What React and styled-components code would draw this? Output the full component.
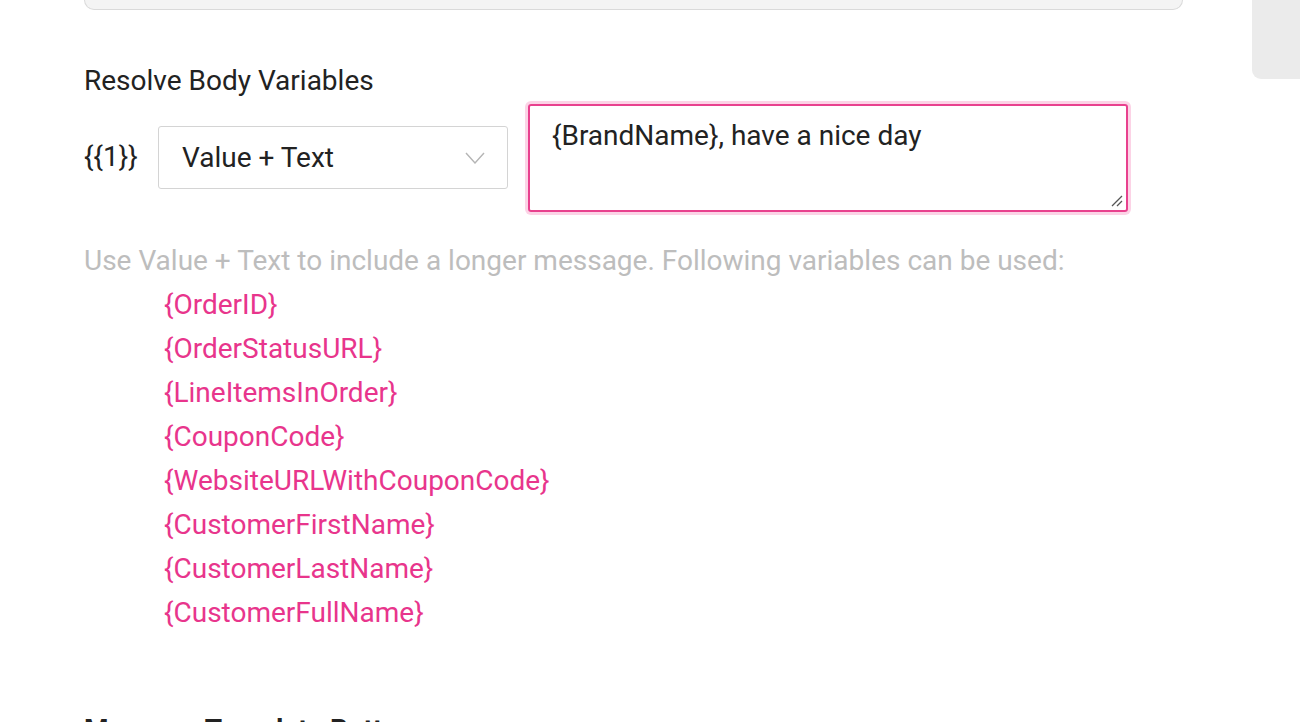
import React from "react";
import styled, { createGlobalStyle } from "styled-components";

const Global = createGlobalStyle`
  html, body { margin: 0; padding: 0; background: #fff; }
  body { font-family: Roboto, "Noto Sans", "Liberation Sans", sans-serif; color: #222; overflow: hidden; }
  * { box-sizing: border-box; }
`;

const Page = styled.div`
  display: flex;
  align-items: flex-start;
  width: 1300px;
  height: 722px;
  overflow: hidden;
`;

const Main = styled.main`
  width: 1099px;
  margin-left: 84px;
  display: flex;
  flex-direction: column;
`;

const Rail = styled.aside`
  margin-left: auto;
  width: 48px;
  height: 79px;
  background: #ebebeb;
  border-radius: 0 0 0 9px;
`;

const PrevPanel = styled.div`
  height: 10px;
  background: #f4f4f4;
  border: 1.5px solid #dadada;
  border-top: none;
  border-radius: 0 0 10px 10px;
`;

const Heading = styled.h2`
  margin: 54px 0 0;
  font-size: 28px;
  font-weight: 400;
  line-height: 34px;
  color: #222;
`;

const VarRow = styled.div`
  display: flex;
  align-items: flex-start;
  margin-top: 6px;
`;

const VarLabel = styled.span`
  font-size: 28px;
  line-height: 34px;
  margin-top: 36px;
  width: 74px;
  flex: none;
`;

const SelectBox = styled.div`
  margin-top: 22px;
  width: 350px;
  height: 63px;
  border: 1.5px solid #d4d4d4;
  border-radius: 3px;
  display: flex;
  align-items: center;
  justify-content: space-between;
  padding: 0 22px 0 23px;
  font-size: 28px;
  color: #222;
`;

const TextArea = styled.div`
  position: relative;
  margin-left: 20px;
  width: 600px;
  height: 108px;
  border: 2px solid #e8418e;
  border-radius: 3px;
  box-shadow: 0 0 0 3px #fcd3e6;
  padding: 13px 22px;
  font-size: 28px;
  line-height: 34px;
  color: #222;
`;

const Grip = styled.svg`
  position: absolute;
  right: 2px;
  bottom: 2px;
`;

const Help = styled.p`
  margin: 32px 0 0;
  font-size: 28px;
  line-height: 34px;
  color: #bdbdbd;
`;

const VarList = styled.ul`
  list-style: none;
  margin: 5px 0 0;
  padding: 0 0 0 80px;
  display: flex;
  flex-direction: column;
`;

const VarItem = styled.li`
  font-size: 28px;
  line-height: 44px;
  color: #e8358c;
`;

const NextHeading = styled.h2`
  margin: 78px 0 0;
  font-size: 28px;
  font-weight: 700;
  line-height: 34px;
  color: #222;
  white-space: nowrap;
`;

const vars = [
  "{OrderID}",
  "{OrderStatusURL}",
  "{LineItemsInOrder}",
  "{CouponCode}",
  "{WebsiteURLWithCouponCode}",
  "{CustomerFirstName}",
  "{CustomerLastName}",
  "{CustomerFullName}",
];

export default function App() {
  return (
    <>
      <Global />
      <Page>
        <Main>
          <PrevPanel />
          <Heading>Resolve Body Variables</Heading>
          <VarRow>
            <VarLabel>{"{{1}}"}</VarLabel>
            <SelectBox>
              <span>Value + Text</span>
              <svg width="20" height="12" viewBox="0 0 20 12" fill="none">
                <path d="M1 1l9 10 9-10" stroke="#b5b5b5" strokeWidth="1.4" />
              </svg>
            </SelectBox>
            <TextArea>
              {"{BrandName}, have a nice day"}
              <Grip width="14" height="14" viewBox="0 0 14 14">
                <path d="M2 12L12 2M7 12L12 7" stroke="#555" strokeWidth="1.3" />
              </Grip>
            </TextArea>
          </VarRow>
          <Help>Use Value + Text to include a longer message. Following variables can be used:</Help>
          <VarList>
            {vars.map((v) => (
              <VarItem key={v}>{v}</VarItem>
            ))}
          </VarList>
          <NextHeading>Message Template Buttons</NextHeading>
        </Main>
        <Rail />
      </Page>
    </>
  );
}
